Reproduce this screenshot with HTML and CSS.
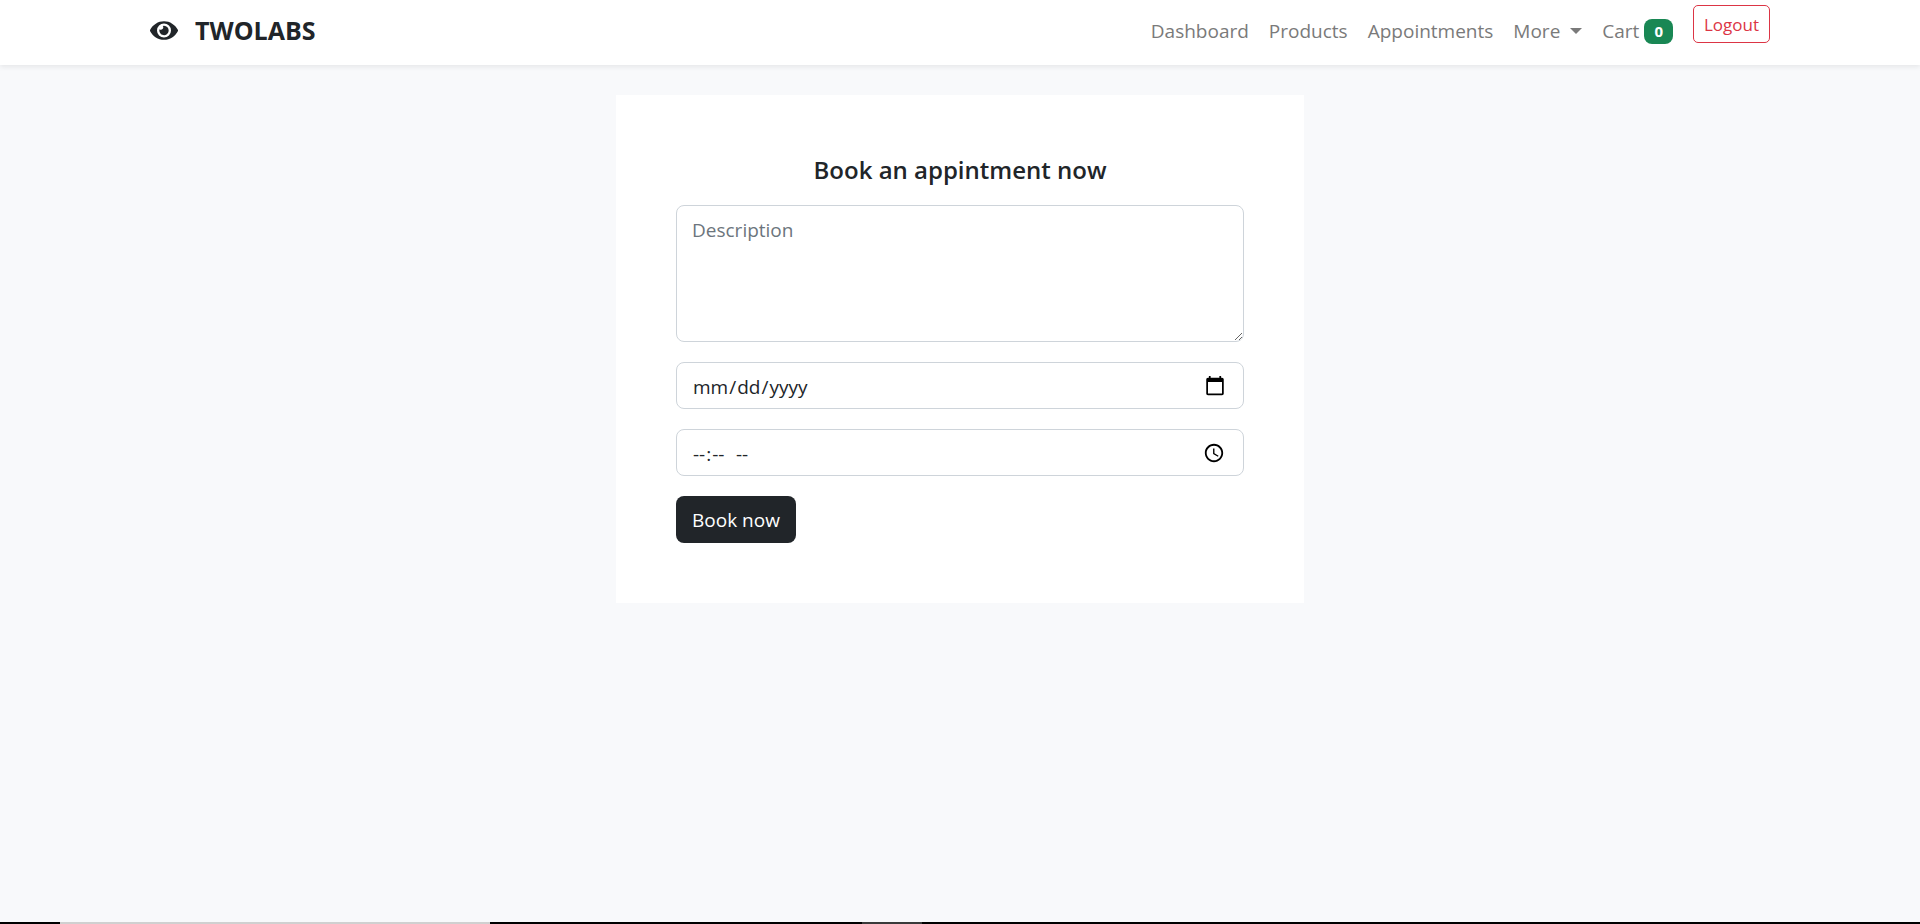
FILE: index.html
```html
<!DOCTYPE html>
<html lang="en">
<head>
<meta charset="utf-8">
<meta name="viewport" content="width=device-width, initial-scale=1">
<title>TWOLABS</title>
<link rel="stylesheet" href="styles.css">
</head>
<body>
<header class="navbar">
  <div class="container navbar-inner">
    <a class="brand" href="#">
      <svg class="brand-icon" viewBox="0 0 576 512" aria-hidden="true"><path fill="currentColor" d="M572.52 241.4C518.29 135.59 410.93 64 288 64S57.68 135.64 3.48 241.41a32.35 32.35 0 0 0 0 29.19C57.71 376.41 165.07 448 288 448s230.32-71.64 284.52-177.41a32.35 32.35 0 0 0 0-29.19zM288 400a144 144 0 1 1 144-144 143.93 143.93 0 0 1-144 144zm0-240a95.31 95.31 0 0 0-25.31 3.79 47.85 47.85 0 0 1-66.9 66.9A95.78 95.78 0 1 0 288 160z"/></svg>
      <span>TWOLABS</span>
    </a>
    <nav class="nav">
      <a class="nav-link" href="#">Dashboard</a>
      <a class="nav-link" href="#">Products</a>
      <a class="nav-link" href="#">Appointments</a>
      <a class="nav-link dropdown" href="#">More</a>
      <a class="nav-link cart" href="#">Cart <span class="badge">0</span></a>
      <button class="btn-logout" type="button">Logout</button>
    </nav>
  </div>
</header>
<main class="container main">
  <form class="card">
    <h1 class="card-title">Book an appintment now</h1>
    <textarea class="field field-text" placeholder="Description" aria-label="Description"></textarea>
    <input class="field" type="date" aria-label="Date">
    <input class="field" type="time" aria-label="Time">
    <button class="btn-book" type="submit">Book now</button>
  </form>
</main>
<footer class="strip"></footer>
</body>
</html>
```

FILE: styles.css
```css
* {
  box-sizing: border-box;
}

body {
  margin: 0;
  min-height: 100vh;
  display: flex;
  flex-direction: column;
  background: #f8f9fb;
  color: #212529;
  font: 19px/30px "Open Sans", "Noto Sans", sans-serif;
}

.container {
  width: 100%;
  max-width: 1650px;
  margin: 0 auto;
  padding: 0 15px;
}

.navbar {
  background: #fff;
  padding: 5px 0 8px;
  box-shadow: 0 2px 5px rgba(0, 0, 0, 0.075);
}

.navbar-inner {
  display: flex;
  flex-wrap: wrap;
  align-items: center;
  justify-content: space-between;
}

.brand {
  display: flex;
  align-items: center;
  gap: 17px;
  padding-bottom: 2px;
  color: #212529;
  font-size: 25px;
  font-weight: 700;
  text-decoration: none;
}

.brand-icon {
  width: 28px;
  height: 25px;
}

.nav {
  display: flex;
  flex-wrap: wrap;
  align-items: flex-start;
}

.nav-link {
  display: flex;
  align-items: center;
  padding: 11px 10px;
  color: #7a7a7a;
  text-decoration: none;
}

.dropdown::after {
  content: "";
  margin-left: 10px;
  border: 6px solid transparent;
  border-top-color: currentColor;
  border-bottom: 0;
}

.cart {
  gap: 5px;
}

.badge {
  padding: 5px 10px;
  border-radius: 8px;
  background: #198754;
  color: #fff;
  font-size: 15px;
  font-weight: 700;
  line-height: 15px;
}

.btn-logout {
  margin-left: 10px;
  padding: 6px 10px 4px;
  border: 1px solid #dc3545;
  border-radius: 5px;
  background: transparent;
  color: #dc3545;
  font: inherit;
  font-size: 17px;
  line-height: 26px;
}

.main {
  flex: 1;
  display: flex;
  justify-content: center;
  align-items: flex-start;
  padding-top: 30px;
}

.card {
  width: 100%;
  max-width: 688px;
  padding: 60px;
  display: flex;
  flex-direction: column;
  align-items: flex-start;
  gap: 20px;
  background: #fff;
}

.card-title {
  width: 100%;
  margin: 0;
  font-size: 24px;
  font-weight: 600;
  line-height: 30px;
  text-align: center;
}

.field {
  width: 100%;
  height: 47px;
  padding: 9px 15px 7px;
  border: 1px solid #ced4da;
  border-radius: 8px;
  background: #fff;
  color: #212529;
  font: inherit;
}

.field::-webkit-calendar-picker-indicator {
  width: 22px;
  height: 22px;
  margin-bottom: 2px;
}

.field::-webkit-datetime-edit-ampm-field {
  padding-left: 8px;
}

.field-text {
  display: block;
  height: 137px;
  resize: vertical;
}

.field-text::placeholder {
  color: #6c757d;
}

.btn-book {
  padding: 9px 16px 7px;
  border: 0;
  border-radius: 8px;
  background: #212529;
  color: #fff;
  font: inherit;
  line-height: 31px;
}

.strip {
  height: 2px;
  background: linear-gradient(to right, #000 60px, #d0d0d0 60px 490px, #000 490px 862px, #3a3a3a 862px 922px, #000 922px);
}
```
